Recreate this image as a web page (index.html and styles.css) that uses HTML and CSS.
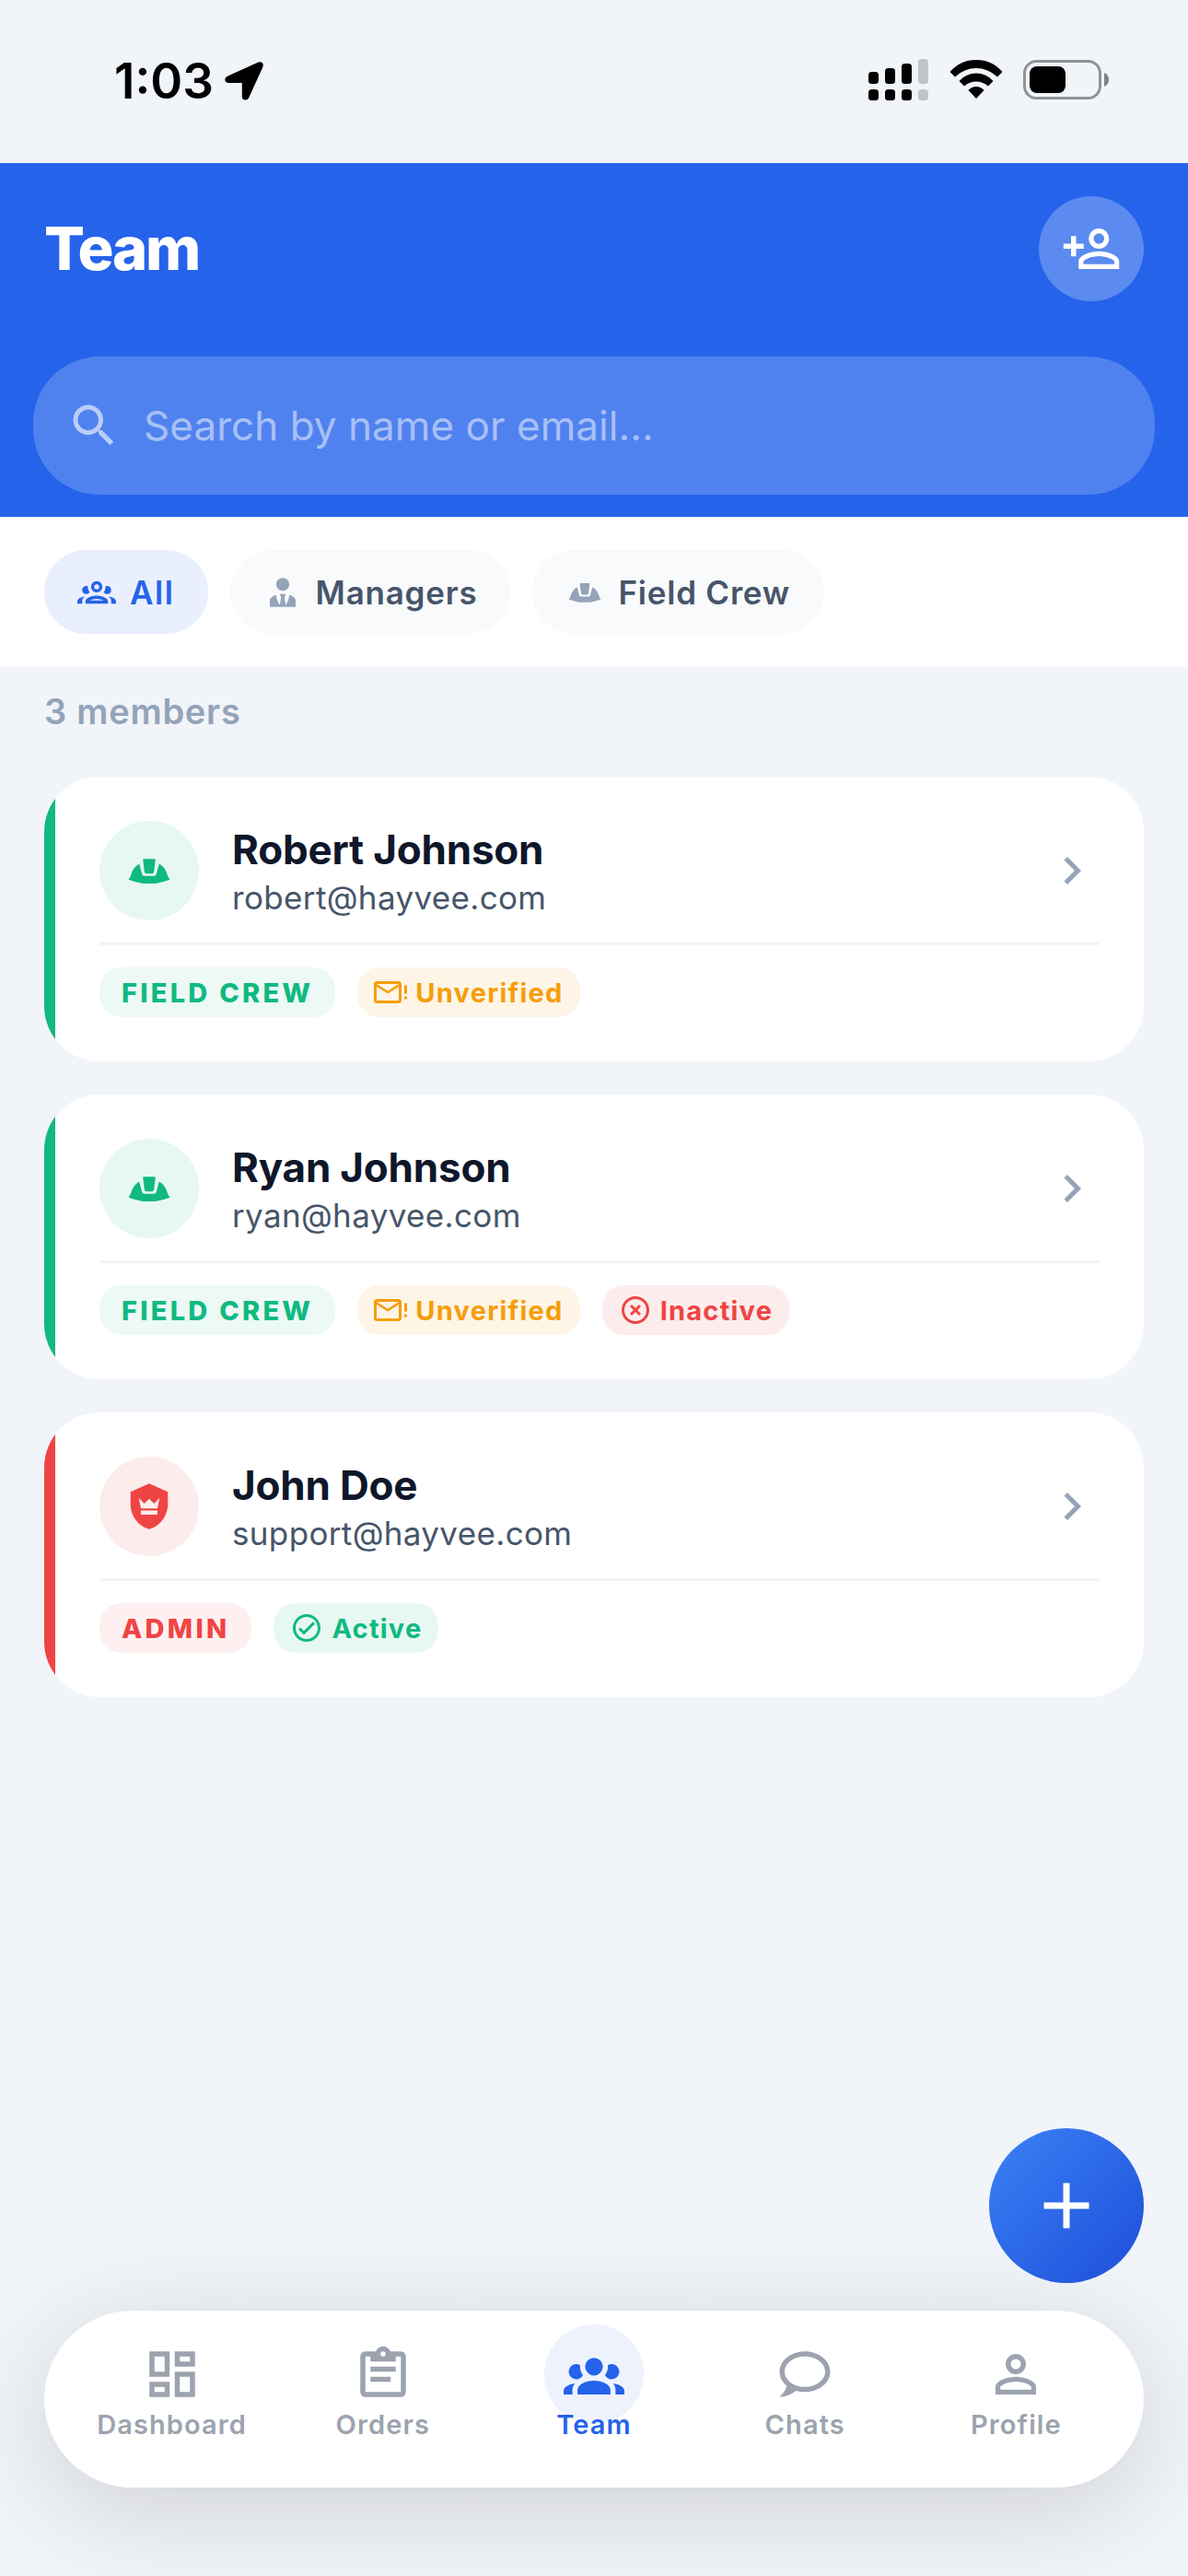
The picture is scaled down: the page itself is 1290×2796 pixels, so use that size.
FILE: index.html
```html
<!DOCTYPE html>
<html lang="en">
<head>
<meta charset="utf-8">
<title>Team</title>
<link rel="stylesheet" href="styles.css">
</head>
<body>
<svg class="sprite" aria-hidden="true">
  <symbol id="hat" viewBox="0 0 24 24"><path d="M9.3 6.3H14.7Q15.1 6.4 15 6.9L14.3 12.6Q14.2 13.4 13.4 13.4H10.6Q9.8 13.4 9.7 12.6L9 6.9Q8.9 6.4 9.3 6.3ZM7.2 8.7L8.6 13.8Q8.8 14.5 9.5 14.5H14.5Q15.2 14.5 15.4 13.8L16.8 8.7Q19.5 10.2 20.6 13.5Q21.2 15.5 22 16.3Q18.5 17.6 15 18.2H9Q5.5 17.6 2 16.3Q2.8 15.5 3.4 13.5Q4.5 10.2 7.2 8.7Z"/></symbol>
  <symbol id="chevron" viewBox="0 0 24 24"><path d="M8.59,16.58L13.17,12L8.59,7.41L10,6L16,12L10,18L8.59,16.58Z"/></symbol>
  <symbol id="mail-alert" viewBox="0 0 24 24"><path d="M24 7H22V13H24V7M24 15H22V17H24V15M20 6C20 4.9 19.1 4 18 4H2C.9 4 0 4.9 0 6V18C0 19.1 .9 20 2 20H18C19.1 20 20 19.1 20 18V6M18 6L10 11L2 6H18M18 18H2V8L10 13L18 8V18Z"/></symbol>
</svg>

<div class="status">
  <div class="clock">
    <span class="time">1:03</span>
    <svg class="location" viewBox="0 0 42 42"><path d="M36.500 0.500Q41.800 -0.500 41.700 4Q41.600 5 41.300 6L26 39.500Q24.500 42 22 41.500Q18.800 41 18.800 38V23H4.500Q0.800 22.800 0.300 20Q0 17 3 15.700Z"/></svg>
  </div>
  <div class="indicators">
    <svg class="signal" viewBox="0 0 66 46">
      <rect x="0" y="14" width="11" height="13" rx="3.500"/><rect x="18" y="10" width="11" height="17" rx="3.500"/><rect x="36" y="5" width="11" height="22" rx="3.500"/><rect class="dim" x="54" y="0" width="11" height="27" rx="3.500"/>
      <rect x="0" y="33" width="11" height="12" rx="3.500"/><rect x="18" y="33" width="11" height="12" rx="3.500"/><rect x="36" y="33" width="11" height="12" rx="3.500"/><rect class="dim" x="54" y="33" width="11" height="12" rx="3.500"/>
    </svg>
    <svg class="wifi" viewBox="0 0 58 42"><path d="M0.500 13Q12 0 29 0T57.500 13L52 18.500Q42 9 29 9T6 18.500ZM10.500 23Q18 14.500 29 14.500T47.500 23L42 28.500Q36 23.500 29 23.500T16 28.500ZM20.500 33Q24 29 29 29T37.500 33L29 42Z"/></svg>
    <svg class="battery" viewBox="0 0 94 43"><rect class="shell" x="1.500" y="1.500" width="82" height="40" rx="13"/><rect x="7" y="7" width="39" height="29" rx="8"/><path class="cap" d="M88 14Q93 16 93 21.500T88 29Z"/></svg>
  </div>
</div>

<header class="header">
  <div class="title-row">
    <h1 class="title">Team</h1>
    <button class="add-person" aria-label="Add member"><svg class="icon-66" viewBox="0 0 24 24"><path d="M15,4A4,4 0 0,0 11,8A4,4 0 0,0 15,12A4,4 0 0,0 19,8A4,4 0 0,0 15,4M15,5.9C16.16,5.9 17.1,6.84 17.1,8A2.1,2.1 0 0,1 15,10.1A2.1,2.1 0 0,1 12.9,8A2.1,2.1 0 0,1 15,5.9M4,7V10H1V12H4V15H6V12H9V10H6V7H4M15,13C12.33,13 7,14.33 7,17V20H23V17C23,14.33 17.67,13 15,13M15,14.9C17.97,14.9 21.1,16.36 21.1,17V18.1H8.9V17C8.9,16.36 12,14.9 15,14.9Z"/></svg></button>
  </div>
  <div class="search">
    <svg class="search-icon" viewBox="0 0 24 24"><path d="M9.5,3A6.5,6.5 0 0,1 16,9.5C16,11.11 15.41,12.59 14.44,13.73L14.71,14H15.5L20.5,19L19,20.5L14,15.5V14.71L13.73,14.44C12.59,15.41 11.11,16 9.5,16A6.5,6.5 0 0,1 3,9.5A6.5,6.5 0 0,1 9.5,3M9.5,5C7,5 5,7 5,9.5C5,12 7,14 9.5,14C12,14 14,12 14,9.5C14,7 12,5 9.5,5Z"/></svg>
    <span class="placeholder">Search by name or email...</span>
  </div>
</header>

<div class="filters">
  <div class="chip chip-active"><svg class="icon-42" viewBox="0 0 24 24"><path d="M12,5A3.5,3.5 0 0,0 8.5,8.5A3.5,3.5 0 0,0 12,12A3.5,3.5 0 0,0 15.5,8.5A3.5,3.5 0 0,0 12,5M12,7A1.5,1.5 0 0,1 13.5,8.5A1.5,1.5 0 0,1 12,10A1.5,1.5 0 0,1 10.5,8.5A1.5,1.5 0 0,1 12,7M5.5,8A2.5,2.5 0 0,0 3,10.5C3,11.44 3.53,12.25 4.29,12.68C4.65,12.88 5.06,13 5.5,13C5.94,13 6.35,12.88 6.71,12.68C7.08,12.47 7.39,12.17 7.62,11.81C6.89,10.86 6.5,9.7 6.5,8.5C6.5,8.41 6.5,8.31 6.5,8.22C6.2,8.08 5.86,8 5.5,8M18.5,8C18.14,8 17.8,8.08 17.5,8.22C17.5,8.31 17.5,8.41 17.5,8.5C17.5,9.7 17.11,10.86 16.38,11.81C16.5,12 16.63,12.15 16.78,12.3C16.94,12.45 17.1,12.58 17.29,12.68C17.65,12.88 18.06,13 18.5,13C18.94,13 19.35,12.88 19.71,12.68C20.47,12.25 21,11.44 21,10.5A2.5,2.5 0 0,0 18.5,8M12,14C9.66,14 5,15.17 5,17.5V19H19V17.5C19,15.17 14.34,14 12,14M4.71,14.55C2.78,14.78 0,15.76 0,17.5V19H3V17.07C3,16.06 3.69,15.22 4.71,14.55M19.29,14.55C20.31,15.22 21,16.06 21,17.07V19H24V17.5C24,15.76 21.22,14.78 19.29,14.55M12,16C13.53,16 15.24,16.5 16.23,17H7.77C8.76,16.5 10.47,16 12,16Z"/></svg><span>All</span></div>
  <div class="chip"><svg class="icon-42" viewBox="0 0 24 24"><path d="M12 3C14.21 3 16 4.79 16 7S14.21 11 12 11 8 9.21 8 7 9.79 3 12 3M16 13.54C16 14.6 15.72 17.07 13.81 19.83L13 15L13.94 13.12C13.32 13.05 12.67 13 12 13S10.68 13.05 10.06 13.12L11 15L10.19 19.83C8.28 17.07 8 14.6 8 13.54C5.61 14.24 4 15.5 4 17V21H20V17C20 15.5 18.4 14.24 16 13.54Z"/></svg><span>Managers</span></div>
  <div class="chip"><svg class="icon-42"><use href="#hat"/></svg><span>Field Crew</span></div>
</div>

<main class="content">
  <div class="count">3 members</div>

  <article class="card crew">
    <div class="card-top">
      <div class="avatar"><svg class="icon-54"><use href="#hat"/></svg></div>
      <div class="who"><div class="name">Robert Johnson</div><div class="email">robert@hayvee.com</div></div>
      <svg class="chevron"><use href="#chevron"/></svg>
    </div>
    <div class="tags">
      <span class="tag role">FIELD CREW</span>
      <span class="tag unverified"><svg class="icon-36"><use href="#mail-alert"/></svg>Unverified</span>
    </div>
  </article>

  <article class="card crew">
    <div class="card-top">
      <div class="avatar"><svg class="icon-54"><use href="#hat"/></svg></div>
      <div class="who"><div class="name">Ryan Johnson</div><div class="email">ryan@hayvee.com</div></div>
      <svg class="chevron"><use href="#chevron"/></svg>
    </div>
    <div class="tags">
      <span class="tag role">FIELD CREW</span>
      <span class="tag unverified"><svg class="icon-36"><use href="#mail-alert"/></svg>Unverified</span>
      <span class="tag inactive"><svg class="icon-36" viewBox="0 0 24 24"><path d="M12,20C7.59,20 4,16.41 4,12C4,7.59 7.59,4 12,4C16.41,4 20,7.59 20,12C20,16.41 16.41,20 12,20M12,2C6.47,2 2,6.47 2,12C2,17.53 6.47,22 12,22C17.53,22 22,17.53 22,12C22,6.47 17.53,2 12,2M14.59,8L12,10.59L9.41,8L8,9.41L10.59,12L8,14.59L9.41,16L12,13.41L14.59,16L16,14.59L13.41,12L16,9.41L14.59,8Z"/></svg>Inactive</span>
    </div>
  </article>

  <article class="card admin">
    <div class="card-top">
      <div class="avatar"><svg class="icon-54" viewBox="0 0 24 24"><path d="M12 1L3 5V11C3 16.55 6.84 21.74 12 23C17.16 21.74 21 16.55 21 11V5L12 1M16 16H8V14H16V16M16 13H8L7 8L9.67 10.67L12 8.34L14.33 10.67L17 8L16 13Z"/></svg></div>
      <div class="who"><div class="name">John Doe</div><div class="email">support@hayvee.com</div></div>
      <svg class="chevron"><use href="#chevron"/></svg>
    </div>
    <div class="tags">
      <span class="tag role">ADMIN</span>
      <span class="tag active"><svg class="icon-36" viewBox="0 0 24 24"><path d="M12 2C6.5 2 2 6.5 2 12S6.5 22 12 22 22 17.5 22 12 17.5 2 12 2M12 20C7.59 20 4 16.41 4 12S7.59 4 12 4 20 7.59 20 12 16.41 20 12 20M16.59 7.58L10 14.17L7.41 11.59L6 13L10 17L18 9L16.59 7.58Z"/></svg>Active</span>
    </div>
  </article>
</main>

<button class="fab" aria-label="Add"><svg class="icon-84" viewBox="0 0 24 24"><path d="M19,13H13V19H11V13H5V11H11V5H13V11H19V13Z"/></svg></button>

<nav class="tabbar">
  <div class="tab"><div class="tab-icon"><svg class="icon-66" viewBox="0 0 24 24"><path d="M19,5V7H15V5H19M9,5V11H5V5H9M19,13V19H15V13H19M9,17V19H5V17H9M21,3H13V9H21V3M11,3H3V13H11V3M21,11H13V21H21V11M11,15H3V21H11V15Z"/></svg></div><span>Dashboard</span></div>
  <div class="tab"><div class="tab-icon"><svg class="icon-66" viewBox="0 0 24 24"><path d="M19,3H14.82C14.4,1.84 13.3,1 12,1C10.7,1 9.6,1.84 9.18,3H5A2,2 0 0,0 3,5V19A2,2 0 0,0 5,21H19A2,2 0 0,0 21,19V5A2,2 0 0,0 19,3M12,3A1,1 0 0,1 13,4A1,1 0 0,1 12,5A1,1 0 0,1 11,4A1,1 0 0,1 12,3M7,7H17V5H19V19H5V5H7V7M17,11H7V9H17V11M15,15H7V13H15V15Z"/></svg></div><span>Orders</span></div>
  <div class="tab tab-current"><div class="tab-icon"><svg class="icon-66" viewBox="0 0 24 24"><path d="M12,5.5A3.5,3.5 0 0,1 15.5,9A3.5,3.5 0 0,1 12,12.5A3.5,3.5 0 0,1 8.5,9A3.5,3.5 0 0,1 12,5.5M5,8C5.56,8 6.08,8.15 6.53,8.42C6.38,9.85 6.8,11.27 7.66,12.38C7.16,13.34 6.16,14 5,14A3,3 0 0,1 2,11A3,3 0 0,1 5,8M19,8A3,3 0 0,1 22,11A3,3 0 0,1 19,14C17.84,14 16.84,13.34 16.34,12.38C17.2,11.27 17.62,9.85 17.47,8.42C17.92,8.15 18.44,8 19,8M5.5,18.25C5.5,16.18 8.41,14.5 12,14.5C15.59,14.5 18.5,16.18 18.5,18.25V20H5.5V18.25M0,20V18.5C0,17.11 1.89,15.94 4.45,15.6C3.86,16.28 3.5,17.22 3.5,18.25V20H0M24,20H20.5V18.25C20.5,17.22 20.14,16.28 19.55,15.6C22.11,15.94 24,17.11 24,18.5V20Z"/></svg></div><span>Team</span></div>
  <div class="tab"><div class="tab-icon"><svg class="icon-66" viewBox="0 0 24 24"><path d="M12,3C6.5,3 2,6.58 2,11C2.05,13.15 3.06,15.17 4.75,16.5C4.75,17.1 4.33,18.67 2,21C4.37,20.89 6.64,20 8.47,18.5C9.61,18.83 10.81,19 12,19C17.5,19 22,15.42 22,11C22,6.58 17.5,3 12,3M12,17C7.58,17 4,14.31 4,11C4,7.69 7.58,5 12,5C16.42,5 20,7.69 20,11C20,14.31 16.42,17 12,17Z"/></svg></div><span>Chats</span></div>
  <div class="tab"><div class="tab-icon"><svg class="icon-66" viewBox="0 0 24 24"><path d="M12,4A4,4 0 0,1 16,8A4,4 0 0,1 12,12A4,4 0 0,1 8,8A4,4 0 0,1 12,4M12,6A2,2 0 0,0 10,8A2,2 0 0,0 12,10A2,2 0 0,0 14,8A2,2 0 0,0 12,6M12,13C14.67,13 20,14.33 20,17V20H4V17C4,14.33 9.33,13 12,13M12,14.9C9.03,14.9 5.9,16.36 5.9,17V18.1H18.1V17C18.1,16.36 14.97,14.9 12,14.9Z"/></svg></div><span>Profile</span></div>
</nav>
</body>
</html>
```
FILE: styles.css
```css
* { box-sizing: border-box; }
html, body { margin: 0; }
body {
  display: flex;
  flex-direction: column;
  width: 1290px;
  height: 2796px;
  overflow: hidden;
  background: #f1f4f9;
  font-family: Inter, "Liberation Sans", sans-serif;
}
svg { display: block; flex: none; fill: currentColor; }
button { border: 0; padding: 0; }
.sprite { position: absolute; width: 0; height: 0; }
.icon-36 { width: 36px; height: 36px; }
.icon-42 { width: 42px; height: 42px; }
.icon-54 { width: 54px; height: 54px; }
.icon-66 { width: 66px; height: 66px; }
.icon-84 { width: 84px; height: 84px; }

/* Status bar */
.status {
  flex: none;
  display: flex;
  justify-content: space-between;
  height: 177px;
  padding: 64px 85px 0 124px;
  color: #000;
}
.clock { display: flex; gap: 12px; }
.time {
  width: 108px;
  font-size: 53px;
  line-height: 49px;
  font-weight: 600;
  letter-spacing: 0;
  white-space: nowrap;
}
.location { width: 42px; height: 42px; margin-top: 3px; }
.indicators { display: flex; }
.signal { width: 66px; height: 46px; }
.dim { opacity: 0.2; }
.wifi { width: 58px; height: 42px; margin: 1px 0 0 22px; }
.battery { width: 94px; height: 43px; margin: 1px 0 0 22px; }
.shell { fill: none; stroke: #909396; stroke-width: 3px; }
.cap { fill: #808284; }

/* Header */
.header {
  flex: none;
  height: 384px;
  padding: 36px;
  background: #2563eb;
  color: #fff;
}
.title-row {
  display: flex;
  justify-content: space-between;
  align-items: center;
  padding: 0 12px;
}
.title {
  margin: 0;
  font-size: 65px;
  line-height: 80px;
  font-weight: 800;
  letter-spacing: -2.3px;
}
.add-person {
  display: grid;
  place-items: center;
  width: 114px;
  height: 114px;
  border-radius: 50%;
  background: rgba(255, 255, 255, 0.25);
  color: #fff;
}
.search {
  display: flex;
  align-items: center;
  gap: 24px;
  height: 150px;
  margin-top: 60px;
  padding: 0 36px;
  border-radius: 72px;
  background: rgba(255, 255, 255, 0.2);
}
.search-icon { width: 60px; height: 60px; opacity: 0.6; }
.placeholder {
  color: rgba(255, 255, 255, 0.5);
  font-size: 44px;
  line-height: 54px;
  letter-spacing: 0.05px;
  white-space: nowrap;
}

/* Filters */
.filters {
  flex: none;
  display: flex;
  gap: 24px;
  height: 163px;
  padding: 36px 48px;
  background: #fff;
}
.chip {
  display: flex;
  align-items: center;
  gap: 15px;
  height: 91px;
  padding: 0 36px;
  border-radius: 45px;
  background: #f8fafc;
  color: #94a3b8;
  font-size: 35px;
  font-weight: 600;
  letter-spacing: 0.78px;
  white-space: nowrap;
}
.chip span { color: #475569; }
.chip-active { background: #e9effd; letter-spacing: 1.6px; }
.chip-active, .chip-active span { color: #2563eb; }

/* Member list */
.content {
  display: flex;
  flex-direction: column;
  gap: 36px;
  padding: 24px 48px 0;
}
.count {
  height: 59px;
  color: #94a3b8;
  font-size: 38px;
  line-height: 48px;
  font-weight: 600;
  letter-spacing: 0.75px;
}
.card {
  height: 309px;
  padding: 48px 48px 0 60px;
  border-radius: 60px;
  background: linear-gradient(to right, var(--accent) 12px, #fff 12px);
}
.crew { --accent: #10b981; --avatar: #e7f8f2; --role: #ecf9f5; }
.admin { --accent: #ef4444; --avatar: #fdecec; --role: #fef0f0; }
.card-top {
  display: flex;
  align-items: center;
  height: 135px;
  padding-bottom: 24px;
  border-bottom: 3px solid #f1f5f9;
}
.avatar {
  display: grid;
  place-items: center;
  width: 108px;
  height: 108px;
  border-radius: 50%;
  background: var(--avatar);
  color: var(--accent);
}
.who { flex: 1; padding: 2px 0 0 36px; }
.name {
  color: #0f172a;
  font-size: 44px;
  line-height: 56px;
  font-weight: 700;
  letter-spacing: -0.2px;
}
.email { color: #475569; font-size: 35px; line-height: 48px; letter-spacing: 0.35px; }
.chevron { width: 60px; height: 60px; color: #94a3b8; }
.tags { display: flex; gap: 24px; padding-top: 24px; }
.tag {
  display: flex;
  align-items: center;
  gap: 9px;
  height: 54px;
  padding: 0 18px;
  border-radius: 24px;
  font-size: 29px;
  font-weight: 700;
  letter-spacing: 1.23px;
  white-space: nowrap;
}
.role { padding: 0 24px; background: var(--role); color: var(--accent); font-weight: 800; letter-spacing: 3.25px; }
.unverified { background: #fef5e7; color: #f59e0b; }
.inactive { background: #fdecec; color: #ef4444; }
.active { background: #e7f8f2; color: #10b981; }

/* Floating button and tab bar */
.fab {
  position: absolute;
  z-index: 1;
  left: 1074px;
  top: 2310px;
  display: grid;
  place-items: center;
  width: 168px;
  height: 168px;
  border-radius: 50%;
  background: linear-gradient(135deg, #3b82f6, #1d4ed8);
  color: #fff;
}
.tabbar {
  flex: none;
  display: flex;
  height: 192px;
  margin: auto 48px 96px;
  padding: 15px 24px 0;
  border-radius: 96px;
  background: #fff;
  box-shadow: 0 24px 120px rgba(0, 0, 0, 0.15);
}
.tab {
  flex: 1;
  display: flex;
  flex-direction: column;
  align-items: center;
  color: #9ca3af;
  font-size: 29px;
  line-height: 36px;
  font-weight: 600;
  letter-spacing: 1.1px;
}
.tab span { position: relative; margin-top: -17px; }
.tab-icon { display: grid; place-items: center; width: 108px; height: 108px; border-radius: 50%; }
.tab-current { color: #2563eb; }
.tab-current .tab-icon { background: #edf2fd; }
```
